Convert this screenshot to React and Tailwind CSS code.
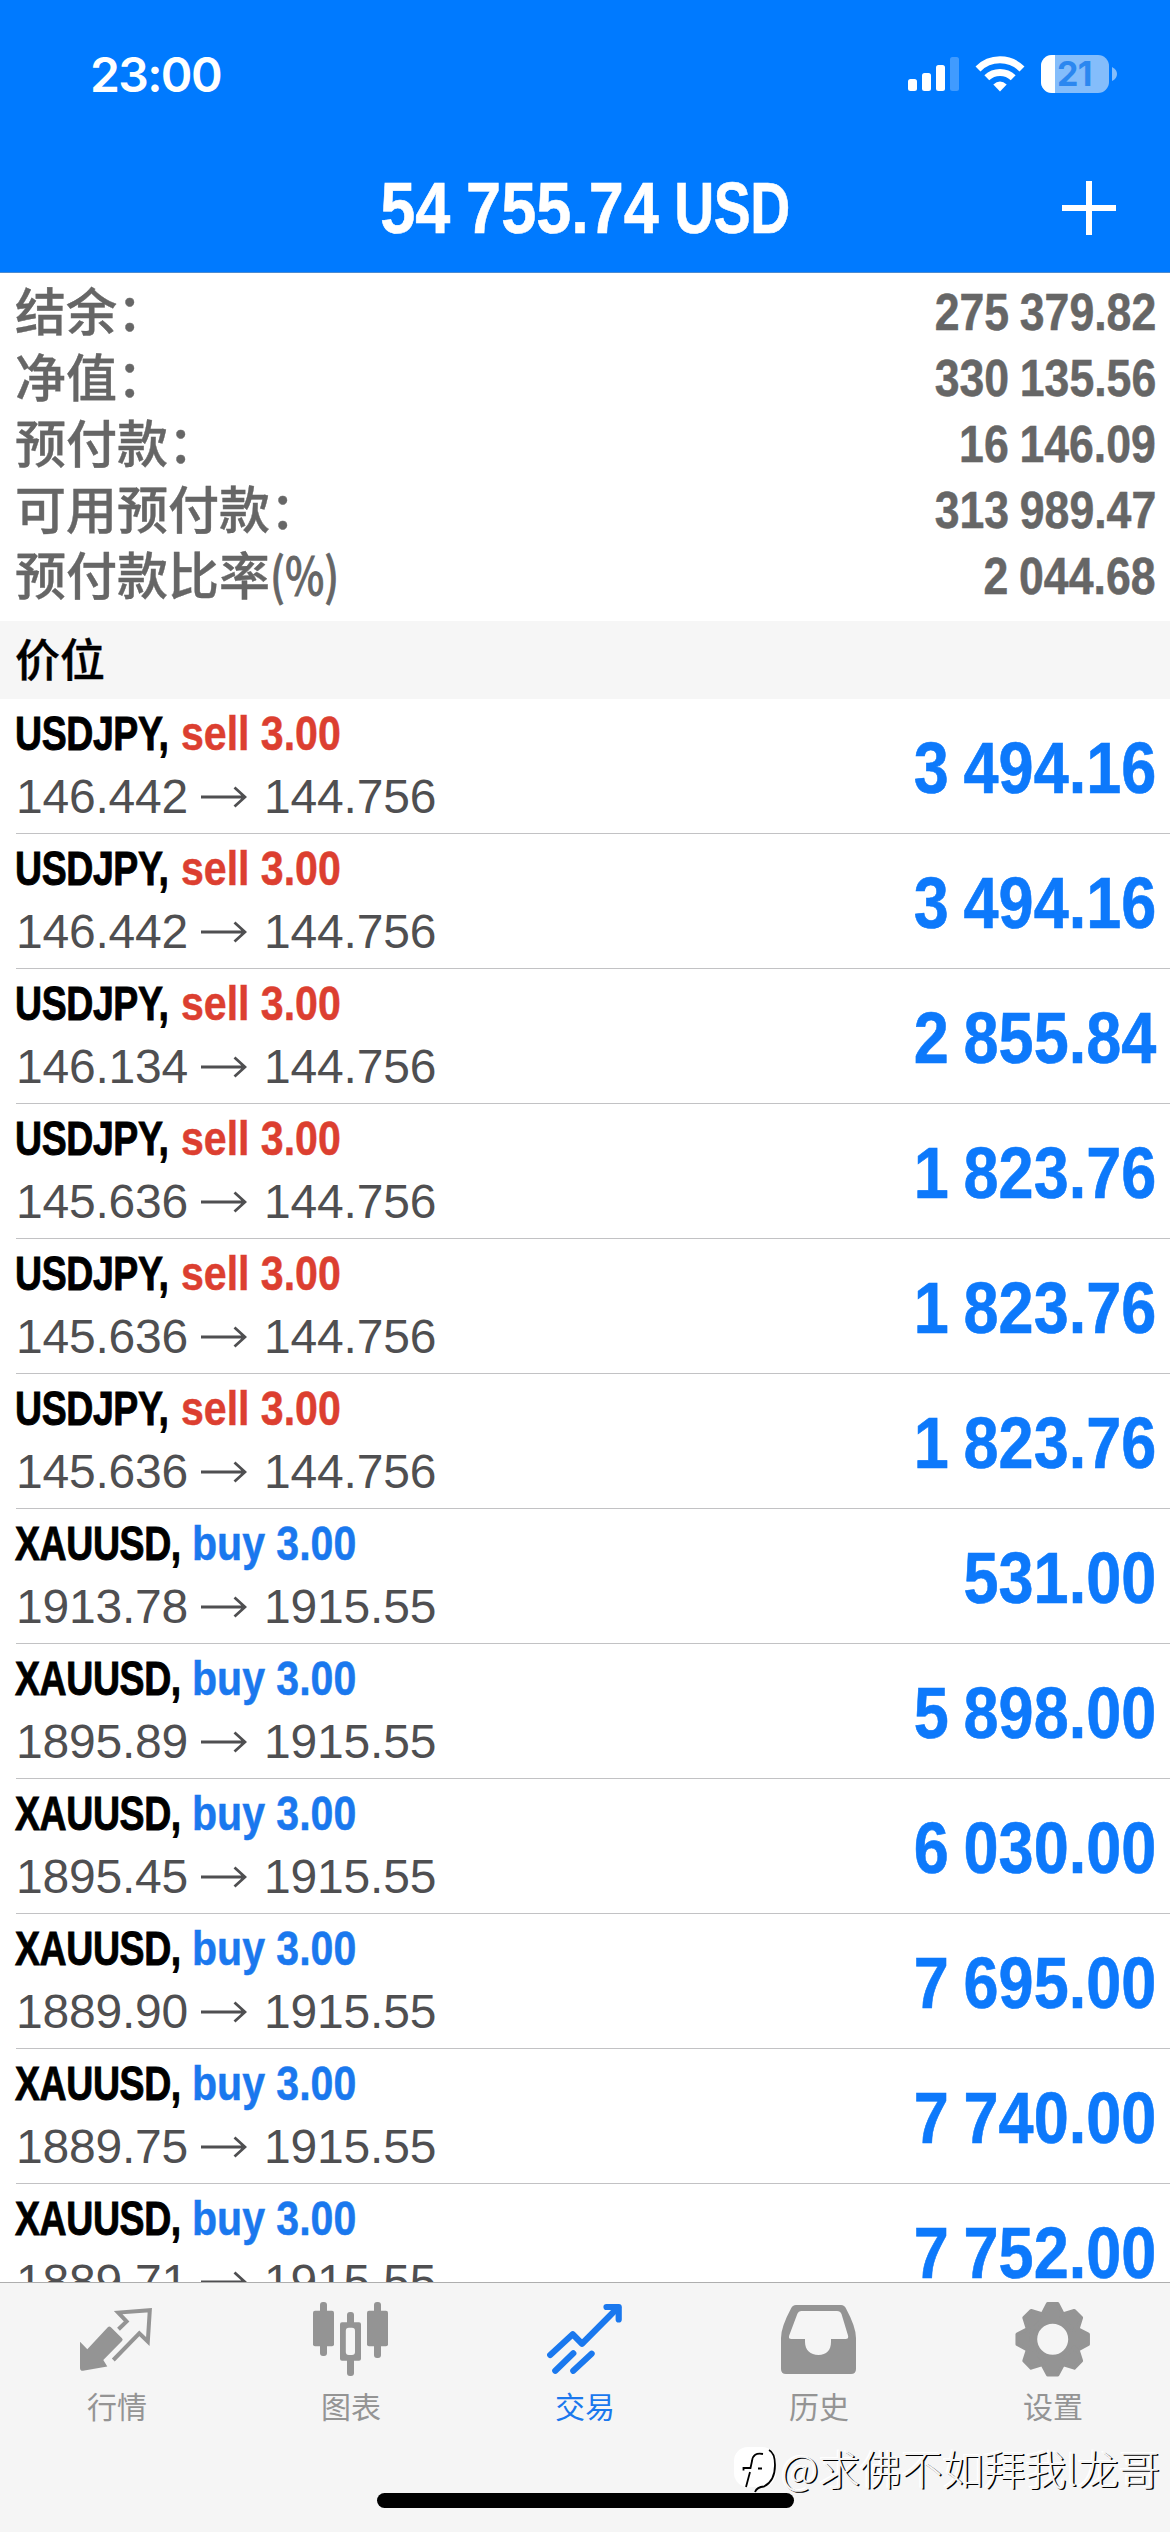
const summary = [
  { label: "结余：", value: "275 379.82" },
  { label: "净值：", value: "330 135.56" },
  { label: "预付款：", value: "16 146.09" },
  { label: "可用预付款：", value: "313 989.47" },
  { label: "预付款比率", unit: "(%)", value: "2 044.68" },
];

const positions = [
  { symbol: "USDJPY", side: "sell", open: "146.442", current: "144.756", profit: "3 494.16" },
  { symbol: "USDJPY", side: "sell", open: "146.442", current: "144.756", profit: "3 494.16" },
  { symbol: "USDJPY", side: "sell", open: "146.134", current: "144.756", profit: "2 855.84" },
  { symbol: "USDJPY", side: "sell", open: "145.636", current: "144.756", profit: "1 823.76" },
  { symbol: "USDJPY", side: "sell", open: "145.636", current: "144.756", profit: "1 823.76" },
  { symbol: "USDJPY", side: "sell", open: "145.636", current: "144.756", profit: "1 823.76" },
  { symbol: "XAUUSD", side: "buy", open: "1913.78", current: "1915.55", profit: "531.00" },
  { symbol: "XAUUSD", side: "buy", open: "1895.89", current: "1915.55", profit: "5 898.00" },
  { symbol: "XAUUSD", side: "buy", open: "1895.45", current: "1915.55", profit: "6 030.00" },
  { symbol: "XAUUSD", side: "buy", open: "1889.90", current: "1915.55", profit: "7 695.00" },
  { symbol: "XAUUSD", side: "buy", open: "1889.75", current: "1915.55", profit: "7 740.00" },
  { symbol: "XAUUSD", side: "buy", open: "1889.71", current: "1915.55", profit: "7 752.00" },
];

function QuotesIcon() {
  return (
    <svg viewBox="0 0 76 76" className="size-[76px]" fill="none">
      <path
        d="M1 40.7 8.3 48.3 28.8 26.2Q30.3 24.6 31.9 26.2L43 37.2Q44.4 38.6 43 40L24.3 59 28.3 65.6 4 69.8Q1 70 1 67Z"
        fill="currentColor"
      />
      <path
        d="M39.5 28.3 47.6 20.4 39.2 11.6 70.8 9.2 68.8 40.5 60.3 32.3 34.3 59"
        stroke="currentColor"
        strokeWidth="4"
      />
    </svg>
  );
}

function ChartsIcon() {
  return (
    <svg viewBox="0 0 76 76" className="size-[76px]" fill="currentColor">
      <rect x="7" y="1" width="7" height="54" rx="3" />
      <rect x="0" y="9.7" width="21" height="35.5" rx="2" />
      <rect x="61" y="1" width="7" height="56" rx="3" />
      <rect x="54" y="9.7" width="21" height="35.5" rx="2" />
      <rect x="34" y="11" width="7" height="64" rx="3" />
      <rect x="27" y="21.3" width="21" height="38.5" rx="2" />
      <rect x="32.8" y="26.8" width="9.2" height="27.2" rx="3" fill="#f5f5f5" />
    </svg>
  );
}

function TradeIcon() {
  return (
    <svg
      viewBox="0 0 76 76"
      className="size-[76px]"
      fill="none"
      stroke="currentColor"
      strokeWidth="6.2"
      strokeLinecap="round"
      strokeLinejoin="round"
    >
      <path d="M3.2 54 25.7 33.3 35 42.7 71 6.5" />
      <path d="M59.5 6H71.7V18.5" />
      <path d="M8.3 69.8 26.3 52.3M26.3 69.8 44.6 52.7" />
    </svg>
  );
}

function HistoryIcon() {
  return (
    <svg viewBox="0 0 76 76" className="size-[76px]" fill="currentColor">
      <path
        fillRule="evenodd"
        d="M15 4H60Q63.5 4 65 7.5 75 26 75 37V68Q75 73 70 73H5Q0 73 0 68V37Q0 26 10 7.5 11.5 4 15 4ZM20.5 10Q17.5 10 16.3 13L8.2 34.5Q7 38 10.5 38H24V41C24 49 29.5 54 37.5 54S50 49 50 41V38H64.5Q68 38 67 34.5L60.5 13Q59.3 10 56 10Z"
      />
    </svg>
  );
}

function SettingsIcon() {
  return (
    <svg viewBox="0 0 76 76" className="size-[76px]" fill="currentColor">
      <circle cx="37.7" cy="38.3" r="22" fill="none" stroke="currentColor" strokeWidth="13" />
      {[0, 45, 90, 135, 180, 225, 270, 315].map((angle) => (
        <path
          key={angle}
          transform={`rotate(${angle} 37.7 38.3)`}
          d="M32.7 2.8H42.7L47.5 12V17H27.9V12Z"
          stroke="currentColor"
          strokeWidth="3.5"
          strokeLinejoin="round"
        />
      ))}
    </svg>
  );
}

const tabs = [
  { label: "行情", Icon: QuotesIcon },
  { label: "图表", Icon: ChartsIcon },
  { label: "交易", Icon: TradeIcon, active: true },
  { label: "历史", Icon: HistoryIcon },
  { label: "设置", Icon: SettingsIcon },
];

function StatusBar() {
  return (
    <div className="flex h-[148px] items-center justify-between pl-[90px] pr-[53px]">
      <span className="pt-[2px] font-['Inter',sans-serif] text-[48px] font-semibold leading-none tracking-[-0.034em]">
        23:00
      </span>
      <div className="flex items-center">
        <svg viewBox="0 0 52 38" className="h-[38px] w-[52px]" fill="white">
          <rect x="0" y="24" width="9" height="12" rx="2.5" />
          <rect x="14" y="18" width="9" height="18" rx="2.5" />
          <rect x="28" y="10" width="9" height="26" rx="2.5" />
          <rect x="42" y="2" width="9" height="34" rx="2.5" opacity="0.25" />
        </svg>
        <svg viewBox="0 0 50 38" className="ml-[15px] h-[38px] w-[50px]" fill="none" stroke="white" strokeWidth="7">
          <path d="M3 14A31 31 0 0 1 47 14" />
          <path d="M11.8 22.8A19 19 0 0 1 38.2 22.8" />
          <path d="M25 36.5 18.3 29.6Q25 23.6 31.7 29.6Z" fill="white" stroke="none" />
        </svg>
        <div className="ml-[16px] flex h-[38px] w-[68px] items-center rounded-[11px] bg-[#84bdfb]">
          <div className="h-full w-[14px] rounded-l-[11px] bg-white" />
          <span className="ml-[2px] font-['Inter',sans-serif] text-[34px] font-bold leading-none tracking-[-0.02em] text-[#2b87f0]">
            21
          </span>
        </div>
        <svg viewBox="0 0 5 14" className="ml-[3px] h-[14px] w-[5px]" fill="#84bdfb">
          <path d="M0 0Q5 2.5 5 7T0 14Z" />
        </svg>
      </div>
    </div>
  );
}

function PositionRow({ position }) {
  const isBuy = position.side === "buy";

  return (
    <div className="ml-4 flex h-[135px] shrink-0 justify-between border-b border-[#c2c2c4] pr-[14px] pt-[3px]">
      <div>
        <div className="-ml-px flex h-[63px] items-center whitespace-nowrap text-[48px] font-bold leading-none">
          <span
            className={`origin-left scale-x-[0.78] tracking-[-0.01em] text-black [-webkit-text-stroke:0.9px_currentColor] ${
              isBuy ? "w-[177px]" : "w-[166px]"
            }`}
          >
            {position.symbol},
          </span>
          <span
            className={`origin-left scale-x-[0.855] [-webkit-text-stroke:0.5px_currentColor] ${
              isBuy ? "text-[#1a78ee]" : "text-[#dc3f30]"
            }`}
          >
            {position.side} 3.00
          </span>
        </div>
        <div className="flex h-[63px] items-center text-[48px] leading-none text-[#4f4f51]">
          <span className="tracking-[-0.2px]">{position.open}</span>
          <svg viewBox="0 0 46 22" className="ml-[13px] mr-[17px] h-[22px] w-[46px]" fill="none" stroke="currentColor" strokeWidth="2.8">
            <path d="M0 11H44M33.5 1.5 44 11 33.5 20.5" />
          </svg>
          <span className="tracking-[-0.2px]">{position.current}</span>
        </div>
      </div>
      <div className="flex origin-right scale-x-[0.875] items-center whitespace-nowrap text-[72px] font-bold leading-none text-[#0d79fb] [-webkit-text-stroke:0.6px_currentColor] [word-spacing:-3px]">
        {position.profit}
      </div>
    </div>
  );
}

export default function App() {
  return (
    <div className="relative flex h-[2532px] w-[1170px] flex-col overflow-hidden bg-white font-['Liberation_Sans','Noto_Sans_CJK_SC',sans-serif]">
      <header className="h-[273px] shrink-0 border-b border-[#4d8bd0] bg-[#007aff] text-white">
        <StatusBar />
        <div className="grid h-[120px] grid-cols-[1fr_auto_1fr] items-center">
          <span />
          <h1 className="scale-x-[0.875] whitespace-nowrap text-[72px] font-bold leading-none [-webkit-text-stroke:0.6px_currentColor] [word-spacing:-2px]">
            54 755.74{" "}
            <span className="-mr-[18px] inline-block origin-left scale-x-[0.88] tracking-[-0.01em]">USD</span>
          </h1>
          <svg viewBox="0 0 54 54" className="mr-[54px] size-[54px] justify-self-end" stroke="white" strokeWidth="6">
            <path d="M0 27H54M27 0V54" />
          </svg>
        </div>
      </header>

      <section className="shrink-0 pb-3 pl-[15px] pr-[14px] pt-[6px] text-[#666]">
        {summary.map((row) => (
          <div key={row.label} className="flex h-[66px] items-center justify-between">
            <span className="flex pb-[5px] font-['Noto_Sans_CJK_SC',sans-serif] text-[51px] font-medium leading-none [-webkit-text-stroke:0.4px_currentColor]">
              {row.label}
              {row.unit ? (
                <span className="origin-left scale-x-[0.82] [-webkit-text-stroke:0.8px_currentColor]">
                  {row.unit}
                </span>
              ) : null}
            </span>
            <span className="origin-right scale-x-[0.875] pt-px text-[51px] font-bold leading-none [-webkit-text-stroke:0.5px_currentColor] [word-spacing:-2px]">
              {row.value}
            </span>
          </div>
        ))}
      </section>

      <div className="flex h-[78px] shrink-0 items-center bg-[#f6f6f6] pb-[5px] pl-[15px] font-['Noto_Sans_CJK_SC',sans-serif] text-[45px] font-medium leading-none text-black [-webkit-text-stroke:0.4px_currentColor]">
        价位
      </div>

      <main className="flex min-h-0 flex-1 flex-col overflow-hidden">
        {positions.map((position, index) => (
          <PositionRow key={index} position={position} />
        ))}
      </main>

      <nav className="grid h-[250px] shrink-0 grid-cols-5 border-t border-[#aeaeae] bg-[#f5f5f5] pt-[18px]">
        {tabs.map(({ label, Icon, active }) => (
          <div
            key={label}
            className={`flex flex-col items-center ${active ? "text-[#1a78ee]" : "text-[#949494]"}`}
          >
            <Icon />
            <span className="mt-[13px] font-['Noto_Sans_CJK_SC',sans-serif] text-[30px] leading-none">
              {label}
            </span>
          </div>
        ))}
      </nav>

      <div className="absolute bottom-6 left-[377px] h-[15px] w-[417px] rounded-full bg-black" />

      <div className="absolute bottom-[37px] right-[10px] flex items-center">
        <svg viewBox="0 0 46 52" className="mr-px h-[52px] w-[46px]" fill="none" stroke="black" strokeWidth="1.8">
          <rect x="0" y="4" width="42" height="40" rx="14" fill="white" stroke="none" />
          <path d="M29 11Q19 9 18 18L16.5 25H9.5V27.5M16 29 12 44M24 25.5H28M35 7Q41 10 41 22 41 38 30 43.5 23 44 21 49" />
        </svg>
        <span className="mb-[2px] whitespace-nowrap font-['Noto_Sans_CJK_SC',sans-serif] text-[41.3px] font-light leading-none text-[#f5f5f5] [text-shadow:1.5px_1px_0_#000,-1.5px_-1px_0_#fff]">
          @求佛不如拜我l龙哥
        </span>
      </div>
    </div>
  );
}
